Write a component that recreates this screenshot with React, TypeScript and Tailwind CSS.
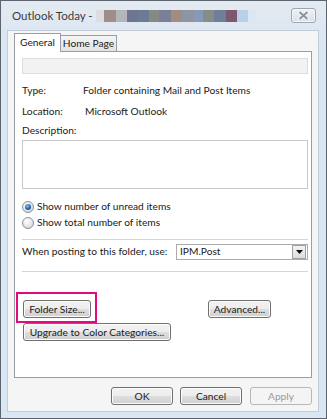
import React from "react";

const mosaic: [string, string][] = [
  ["#dcdde2", "w-[8px]"],
  ["#a08c88", "w-[12px]"],
  ["#b5b6ba", "w-[11px]"],
  ["#6e7590", "w-[11px]"],
  ["#6b7b95", "w-[11px]"],
  ["#858a85", "w-[10px]"],
  ["#7a8095", "w-[12px]"],
  ["#a18c83", "w-[11px]"],
  ["#8d96a0", "w-[11px]"],
  ["#8898b8", "w-[10px]"],
  ["#868c88", "w-[11px]"],
  ["#6f7f98", "w-[12px]"],
  ["#7d5870", "w-[11px]"],
  ["#b8d0e8", "w-[11px]"],
  ["#dbe7f3", "w-[8px]"],
];

function Btn({ children, className = "", disabled = false }: { children: React.ReactNode; className?: string; disabled?: boolean }) {
  return (
    <button
      className={`h-[18px] rounded-[3px] border text-[10.2px] leading-none ${
        disabled
          ? "border-[#b5b9bc] bg-[#f4f4f4] text-[#9a9a9a]"
          : "border-[#707070] bg-[linear-gradient(#f3f3f3_0%,#ececec_50%,#dedede_51%,#d0d0d0_100%)] text-[#1a1a1a] shadow-[inset_0_0_0_1px_#fbfbfb]"
      } ${className}`}
    >
      {children}
    </button>
  );
}

function Radio({ checked }: { checked?: boolean }) {
  return (
    <svg width="12" height="12" viewBox="0 0 12 12" className="shrink-0">
      <defs>
        <radialGradient id={checked ? "rg1" : "rg2"} cx="0.4" cy="0.35" r="0.7">
          <stop offset="0" stopColor="#ffffff" />
          <stop offset="1" stopColor="#d4d6d9" />
        </radialGradient>
        <radialGradient id="dot" cx="0.4" cy="0.35" r="0.7">
          <stop offset="0" stopColor="#8fc7f2" />
          <stop offset="0.6" stopColor="#2a6eb0" />
          <stop offset="1" stopColor="#1b4b80" />
        </radialGradient>
      </defs>
      <circle cx="6" cy="6" r="5.5" fill={`url(#${checked ? "rg1" : "rg2"})`} stroke="#8e9196" strokeWidth="1" />
      {checked && <circle cx="6" cy="6" r="3" fill="url(#dot)" />}
    </svg>
  );
}

export default function App() {
  return (
    <div
      className="flex h-[419px] w-[327px] flex-col border border-[#5c6470] bg-[linear-gradient(#e4eaf1_0%,#dbe6f3_40px,#d9e6f4_100%)] text-[#1a1a1a]"
      style={{ fontFamily: "Lato, 'Noto Sans', sans-serif" }}
    >
      {/* title bar */}
      <div className="flex h-[29px] shrink-0 items-center pl-[11px] pr-[10px]">
        <span className="text-[11.5px] leading-none text-[#3b3b3b]">Outlook Today -&nbsp;</span>
        <div className="flex h-[12px]">
          {mosaic.map(([c, w], i) => (
            <div key={i} className={`h-full ${w}`} style={{ backgroundColor: c }} />
          ))}
        </div>
        <div className="ml-auto flex h-[15px] w-[25px] items-center justify-center rounded-[3px] border border-[#9aa6b4] bg-[linear-gradient(#eef2f6,#d9e1ea)] shadow-[inset_0_0_0_1px_#f4f7fa]">
          <svg width="11" height="9" viewBox="0 0 11 9">
            <path d="M1.5 1 L9.5 8 M9.5 1 L1.5 8" stroke="#f6f6f6" strokeWidth="3.6" strokeLinecap="square" />
            <path d="M1.5 1 L9.5 8 M9.5 1 L1.5 8" stroke="#8c8f94" strokeWidth="1.8" />
          </svg>
        </div>
      </div>

      {/* client area */}
      <div className="mb-[6px] ml-[6px] mr-[7px] flex flex-1 flex-col border border-[#c3cdd9] bg-[#f5f5f5]">
        {/* tabs */}
        <div className="ml-[6px] mt-[2px] flex items-end">
          <div className="relative z-10 -mb-px flex h-[19px] w-[47px] items-center justify-center border border-b-0 border-[#9a9da3] bg-white text-[10.2px]">
            General
          </div>
          <div className="-ml-px flex h-[16px] w-[57px] items-center justify-center border border-b-0 border-[#9a9da3] bg-[linear-gradient(#f5f5f5,#e3e3e3)] text-[10.2px]">
            Home Page
          </div>
        </div>

        {/* panel */}
        <div className="ml-[6px] flex h-[327px] w-[298px] flex-col border border-[#9a9da3] bg-white pl-[7px] text-[10.2px]">
          <div className="mt-[6px] h-[16px] w-[286px] border border-[#dcdcdc] bg-[#f2f2f2]" />

          <div className="mt-[7px] flex h-[20px] items-center">
            <span className="w-[61px]">Type:</span>
            <span>Folder containing Mail and Post Items</span>
          </div>
          <div className="mt-px flex h-[20px] items-center">
            <span className="w-[63px]">Location:</span>
            <span>Microsoft Outlook</span>
          </div>
          <div className="mt-px flex h-[16px] items-center">Description:</div>
          <div className="mt-px h-[49px] w-[286px] border border-[#c8c8c8] bg-white" />

          <div className="mt-[10px] flex h-[16px] items-center gap-[3px]">
            <Radio checked />
            <span>Show number of unread items</span>
          </div>
          <div className="flex h-[16px] items-center gap-[3px]">
            <Radio />
            <span>Show total number of items</span>
          </div>

          <div className="mt-[8px] h-px w-[286px] bg-[#d5d5d5]" />

          <div className="mt-[4px] flex h-[16px] items-center">
            <span className="w-[154px]">When posting to this folder, use:</span>
            <div className="flex h-[16px] w-[132px] items-center border border-[#acacac] bg-white pl-[3px]">
              <span className="flex-1">IPM.Post</span>
              <div className="mr-px flex h-[14px] w-[14px] items-center justify-center border border-[#a0a0a0] bg-[linear-gradient(#f4f4f4,#dcdcdc)]">
                <svg width="7" height="4" viewBox="0 0 7 4">
                  <path d="M0 0 H7 L3.5 4 Z" fill="#111" />
                </svg>
              </div>
            </div>
          </div>

          <div className="mt-[11px] h-px w-[286px] bg-[#d5d5d5]" />

          <div className="ml-px mt-[28px] flex items-center">
            <div className="relative">
              <Btn className="w-[68px]">Folder Size...</Btn>
              <div className="pointer-events-none absolute -bottom-[5px] -left-[7px] -right-[6px] -top-[8px] border-2 border-[#e5097f]" />
            </div>
            <Btn className="ml-[117px] w-[63px]">Advanced...</Btn>
          </div>
          <div className="ml-px mt-[5px] flex">
            <Btn className="w-[148px]">Upgrade to Color Categories...</Btn>
          </div>
        </div>

        {/* dialog buttons */}
        <div className="ml-[103px] mt-[9px] flex gap-[7px]">
          <Btn className="w-[62px]">OK</Btn>
          <Btn className="w-[62px]">Cancel</Btn>
          <Btn className="ml-px w-[62px]" disabled>Apply</Btn>
        </div>
      </div>
    </div>
  );
}
